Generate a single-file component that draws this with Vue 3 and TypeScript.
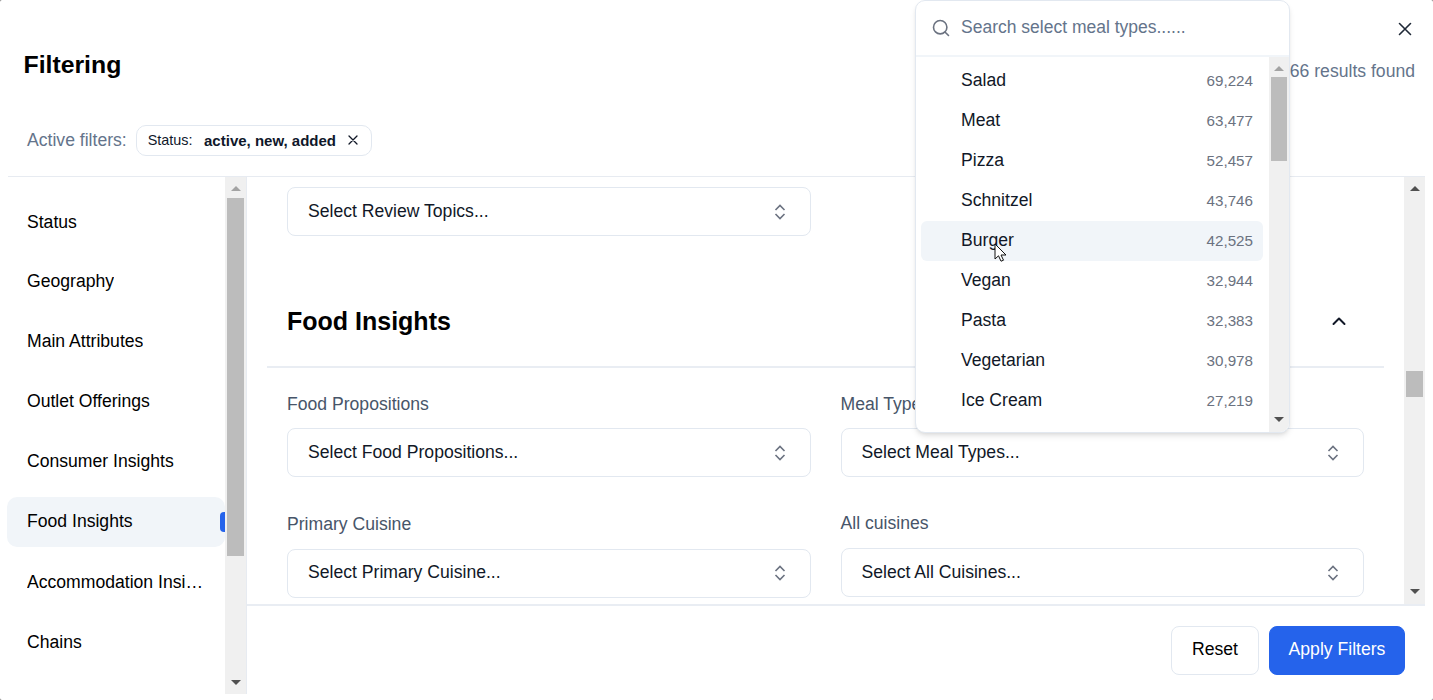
<script setup lang="ts">
const navItems: string[] = ['Status', 'Geography', 'Main Attributes', 'Outlet Offerings', 'Consumer Insights', 'Food Insights', 'Accommodation Insights', 'Chains']
const meals: { name: string; count: string }[] = [
  { name: 'Salad', count: '69,224' },
  { name: 'Meat', count: '63,477' },
  { name: 'Pizza', count: '52,457' },
  { name: 'Schnitzel', count: '43,746' },
  { name: 'Burger', count: '42,525' },
  { name: 'Vegan', count: '32,944' },
  { name: 'Pasta', count: '32,383' },
  { name: 'Vegetarian', count: '30,978' },
  { name: 'Ice Cream', count: '27,219' },
]
</script>

<template>
  <div class="modal">
    <header class="head">
      <h1 class="title">Filtering</h1>
      <span class="results">1,266 results found</span>
      <button class="close" aria-label="Close">
        <svg width="16" height="16" viewBox="0 0 16 16" fill="none" stroke="#1f2937" stroke-width="1.6" stroke-linecap="round"><path d="M2.5 2.5l11 11M13.5 2.5l-11 11" /></svg>
      </button>
    </header>

    <div class="active">
      <span class="active-label">Active filters:</span>
      <span class="chip">
        <span class="chip-key">Status:</span>
        <b class="chip-val">active, new, added</b>
        <svg width="12" height="12" viewBox="0 0 12 12" fill="none" stroke="#111827" stroke-width="1.3" stroke-linecap="round"><path d="M2 2l8 8M10 2l-8 8" /></svg>
      </span>
    </div>

    <div class="body">
      <aside class="side">
        <nav class="nav">
          <div v-for="item in navItems" :key="item" class="nav-item" :class="{ on: item === 'Food Insights' }">
            <span class="nav-text">{{ item }}</span>
            <i v-if="item === 'Food Insights'" class="nav-mark"></i>
          </div>
        </nav>
        <div class="sb sb-side">
          <span class="arrow up dim"></span>
          <div class="track"><div class="thumb thumb-side"></div></div>
          <span class="arrow down"></span>
        </div>
      </aside>

      <div class="right">
        <div class="main-wrap">
          <main class="main">
            <div class="sel-row first">
              <div class="sel half">
                <span>Select Review Topics...</span>
                <svg class="updown" width="14" height="18" viewBox="0 0 14 18" fill="none" stroke="#6b7280" stroke-width="1.6"><path d="M2.5 7L7 2.5 11.5 7M2.5 11L7 15.5 11.5 11" /></svg>
              </div>
            </div>

            <section class="sec">
              <div class="sec-head">
                <h2 class="sec-title">Food Insights</h2>
                <svg width="16" height="16" viewBox="0 0 16 16" fill="none" stroke="#111827" stroke-width="2" stroke-linecap="round" stroke-linejoin="round"><path d="M2.5 11L8 5.5l5.5 5.5" /></svg>
              </div>
              <div class="grid">
                <div class="field">
                  <label>Food Propositions</label>
                  <div class="sel">
                    <span>Select Food Propositions...</span>
                    <svg class="updown" width="14" height="18" viewBox="0 0 14 18" fill="none" stroke="#6b7280" stroke-width="1.6"><path d="M2.5 7L7 2.5 11.5 7M2.5 11L7 15.5 11.5 11" /></svg>
                  </div>
                </div>
                <div class="field">
                  <label>Meal Types</label>
                  <div class="sel">
                    <span>Select Meal Types...</span>
                    <svg class="updown" width="14" height="18" viewBox="0 0 14 18" fill="none" stroke="#6b7280" stroke-width="1.6"><path d="M2.5 7L7 2.5 11.5 7M2.5 11L7 15.5 11.5 11" /></svg>
                  </div>
                </div>
                <div class="field shift">
                  <label>Primary Cuisine</label>
                  <div class="sel">
                    <span>Select Primary Cuisine...</span>
                    <svg class="updown" width="14" height="18" viewBox="0 0 14 18" fill="none" stroke="#6b7280" stroke-width="1.6"><path d="M2.5 7L7 2.5 11.5 7M2.5 11L7 15.5 11.5 11" /></svg>
                  </div>
                </div>
                <div class="field">
                  <label>All cuisines</label>
                  <div class="sel">
                    <span>Select All Cuisines...</span>
                    <svg class="updown" width="14" height="18" viewBox="0 0 14 18" fill="none" stroke="#6b7280" stroke-width="1.6"><path d="M2.5 7L7 2.5 11.5 7M2.5 11L7 15.5 11.5 11" /></svg>
                  </div>
                </div>
              </div>
            </section>
          </main>
          <div class="sb sb-main">
            <span class="arrow up"></span>
            <div class="track"><div class="thumb thumb-main"></div></div>
            <span class="arrow down"></span>
          </div>
        </div>
        <footer class="foot">
          <button class="btn reset">Reset</button>
          <button class="btn apply">Apply Filters</button>
        </footer>
      </div>
    </div>

    <div class="pop">
      <div class="search">
        <svg class="glass" width="20" height="20" viewBox="0 0 20 20" fill="none" stroke="#6b7280" stroke-width="1.6" stroke-linecap="round"><circle cx="9.2" cy="9.2" r="6.7" /><path d="M14.2 14.2L17.5 17.5" /></svg>
        <span class="ph">Search select meal types......</span>
      </div>
      <div class="pop-body">
        <ul class="list">
          <li v-for="m in meals" :key="m.name" class="opt" :class="{ hover: m.name === 'Burger' }">
            <span>{{ m.name }}</span>
            <span class="count">{{ m.count }}</span>
          </li>
        </ul>
        <div class="sb sb-pop">
          <span class="arrow up dim"></span>
          <div class="track"><div class="thumb thumb-pop"></div></div>
          <span class="arrow down"></span>
        </div>
      </div>
    </div>

    <svg class="cursor" width="14" height="20" viewBox="0 0 14 20"><path d="M1 1v15l3.5-3.2L7 18.2l2.5-1L7 12h5z" fill="#fff" stroke="#111" stroke-width="1" stroke-linejoin="round" /></svg>
  </div>
</template>

<style>
html, body { margin: 0; background: #777; }
</style>

<style scoped>
* { box-sizing: border-box; }
.modal {
  position: relative;
  width: 1433px;
  height: 700px;
  overflow: hidden;
  background: #fff;
  border-radius: 2px;
  font-family: "Liberation Sans", Arial, sans-serif;
  color: #0f172a;
  font-size: 17.6px;
  display: flex;
  flex-direction: column;
}
.head {
  height: 112px;
  padding: 0 18px 0 24px;
  display: flex;
  position: relative;
  flex: none;
}
.title { margin: 48px 0 0 -0.5px; font-size: 24.8px; line-height: 34px; font-weight: 700; color: #000; }
.results { margin: 60px 0 0 auto; font-size: 17.6px; line-height: 22px; color: #64748b; }
.close {
  position: absolute;
  top: 21px;
  right: 20px;
  border: 0;
  padding: 0;
  background: none;
  width: 16px;
  height: 16px;
}
.active {
  height: 65px;
  margin: 0 8px;
  padding: 13px 0 0 19px;
  display: flex;
  align-items: flex-start;
  gap: 9px;
  border-bottom: 1px solid #e7ebf1;
  flex: none;
}
.active-label { font-size: 17.6px; line-height: 30px; color: #64748b; }
.chip {
  height: 31px;
  display: inline-flex;
  align-items: center;
  padding: 0 12px 1px 11px;
  border: 1px solid #e2e8f0;
  border-radius: 10px;
  font-size: 14.4px;
}
.chip-key { margin-right: 11.5px; }
.chip-val { margin-right: 10.5px; font-size: 15px; }
.body { flex: 1; min-height: 0; margin: 0 8px 6px; display: flex; }
.side {
  width: 239px;
  flex: none;
  display: flex;
  border-right: 1px solid #e7ebf1;
}
.nav { flex: 1; min-width: 0; padding: 19px 0 0; display: flex; flex-direction: column; }
.nav-item {
  height: 50px;
  margin: 0 0 10.2px -1px;
  padding: 0 20px 0 20px;
  display: flex;
  align-items: center;
  position: relative;
  border-radius: 10px;
  color: #000;
  flex: none;
}
.nav-item:first-child { padding-top: 2px; }
.nav-item.on { background: #f1f5f9; }
.nav-text { white-space: nowrap; overflow: hidden; text-overflow: ellipsis; }
.nav-mark {
  position: absolute;
  right: 0;
  top: 15px;
  width: 5px;
  height: 20px;
  border-radius: 4px 0 0 4px;
  background: #2563eb;
}
.sb { width: 21px; flex: none; display: flex; flex-direction: column; background: #f0f0f0; align-items: center; }
.arrow { width: 0; height: 0; flex: none; border-left: 5px solid transparent; border-right: 5px solid transparent; }
.arrow.up { border-bottom: 5px solid #505050; margin: 9px 0 7px; }
.arrow.up.dim { border-bottom-color: #a3a3a3; }
.arrow.down { border-top: 5px solid #505050; margin: 8px 0 9px; }
.track { flex: 1; width: 100%; padding: 0 2px; min-height: 0; }
.thumb { background: #bcbcbc; width: 100%; }
.thumb-side { height: 358px; }
.thumb-main { height: 26px; margin-top: 173px; }
.thumb-pop { height: 84px; }
.right { flex: 1; min-width: 0; display: flex; flex-direction: column; }
.main-wrap { height: 429px; flex: none; display: flex; border-bottom: 2px solid #e9edf3; }
.sb-main .arrow.down { margin-bottom: 10px; }
.main { flex: 1; min-width: 0; padding: 10px 20px 0; overflow: hidden; }
.sel-row { padding: 0 20px; display: flex; }
.sel {
  height: 49px;
  border: 1px solid #e2e8f0;
  border-radius: 8px;
  background: #fff;
  padding: 0 20px;
  display: flex;
  align-items: center;
  justify-content: space-between;
  font-size: 17.6px;
  color: #111827;
}
.half { width: 524px; }
.updown { margin-right: 3px; }
.sec-head {
  height: 132px;
  padding: 39px 37px 0 20px;
  display: flex;
  align-items: center;
  justify-content: space-between;
  border-bottom: 2px solid #e9edf3;
}
.sec-title { margin: 0; font-size: 25px; line-height: 32px; font-weight: 700; color: #000; }
.grid {
  padding: 24px 20px 0;
  display: grid;
  grid-template-columns: 524px 523.5px;
  column-gap: 29.5px;
  row-gap: 34px;
}
.field label { display: block; font-size: 17.6px; line-height: 24px; color: #475569; margin-bottom: 12px; }
.field:nth-child(n+3) label { margin-bottom: 13px; }
.field.shift { margin-top: 1px; }
.field.shift .sel { padding-bottom: 2px; }
.foot {
  flex: 1;
  display: flex;
  justify-content: flex-end;
  align-items: flex-start;
  gap: 10px;
  padding: 20px 20px 0 0;
}
.btn {
  height: 49px;
  border-radius: 8px;
  font: inherit;
  font-size: 17.6px;
  padding: 0 0 2px;
}
.reset { width: 88px; background: #fff; border: 1px solid #e2e8f0; color: #000; }
.apply { width: 136px; background: #2563eb; border: 1px solid #2563eb; color: #fff; }
.pop {
  position: absolute;
  left: 915px;
  top: 0;
  width: 375px;
  height: 433px;
  background: #fff;
  border: 1px solid #e2e8f0;
  border-radius: 10px;
  box-shadow: 0 4px 6px -1px rgba(0,0,0,.1), 0 2px 4px -2px rgba(0,0,0,.1);
  display: flex;
  flex-direction: column;
  overflow: hidden;
}
.search {
  height: 56px;
  flex: none;
  padding: 0 0 2px 15px;
  display: flex;
  align-items: center;
  gap: 10px;
  border-bottom: 2px solid #f1f5f9;
}
.glass { margin-top: 1px; }
.ph { font-size: 17.5px; color: #64748b; }
.pop-body { flex: 1; min-height: 0; display: flex; }
.list { flex: 1; margin: 0; padding: 4px 6px 0 5px; list-style: none; min-width: 0; overflow: hidden; }
.opt {
  height: 40px;
  padding: 0 10px 2px 40px;
  display: flex;
  align-items: center;
  justify-content: space-between;
  border-radius: 6px;
  color: #111827;
  font-size: 17.6px;
}
.opt.hover { background: #f1f5f9; }
.count { font-size: 15.2px; color: #6b7280; }
.sb-pop { width: 20px; }
.sb-pop .arrow.up { margin-bottom: 6px; }
.sb-pop .arrow.down { margin-bottom: 10px; }
.cursor { position: absolute; left: 994px; top: 243px; }
</style>
